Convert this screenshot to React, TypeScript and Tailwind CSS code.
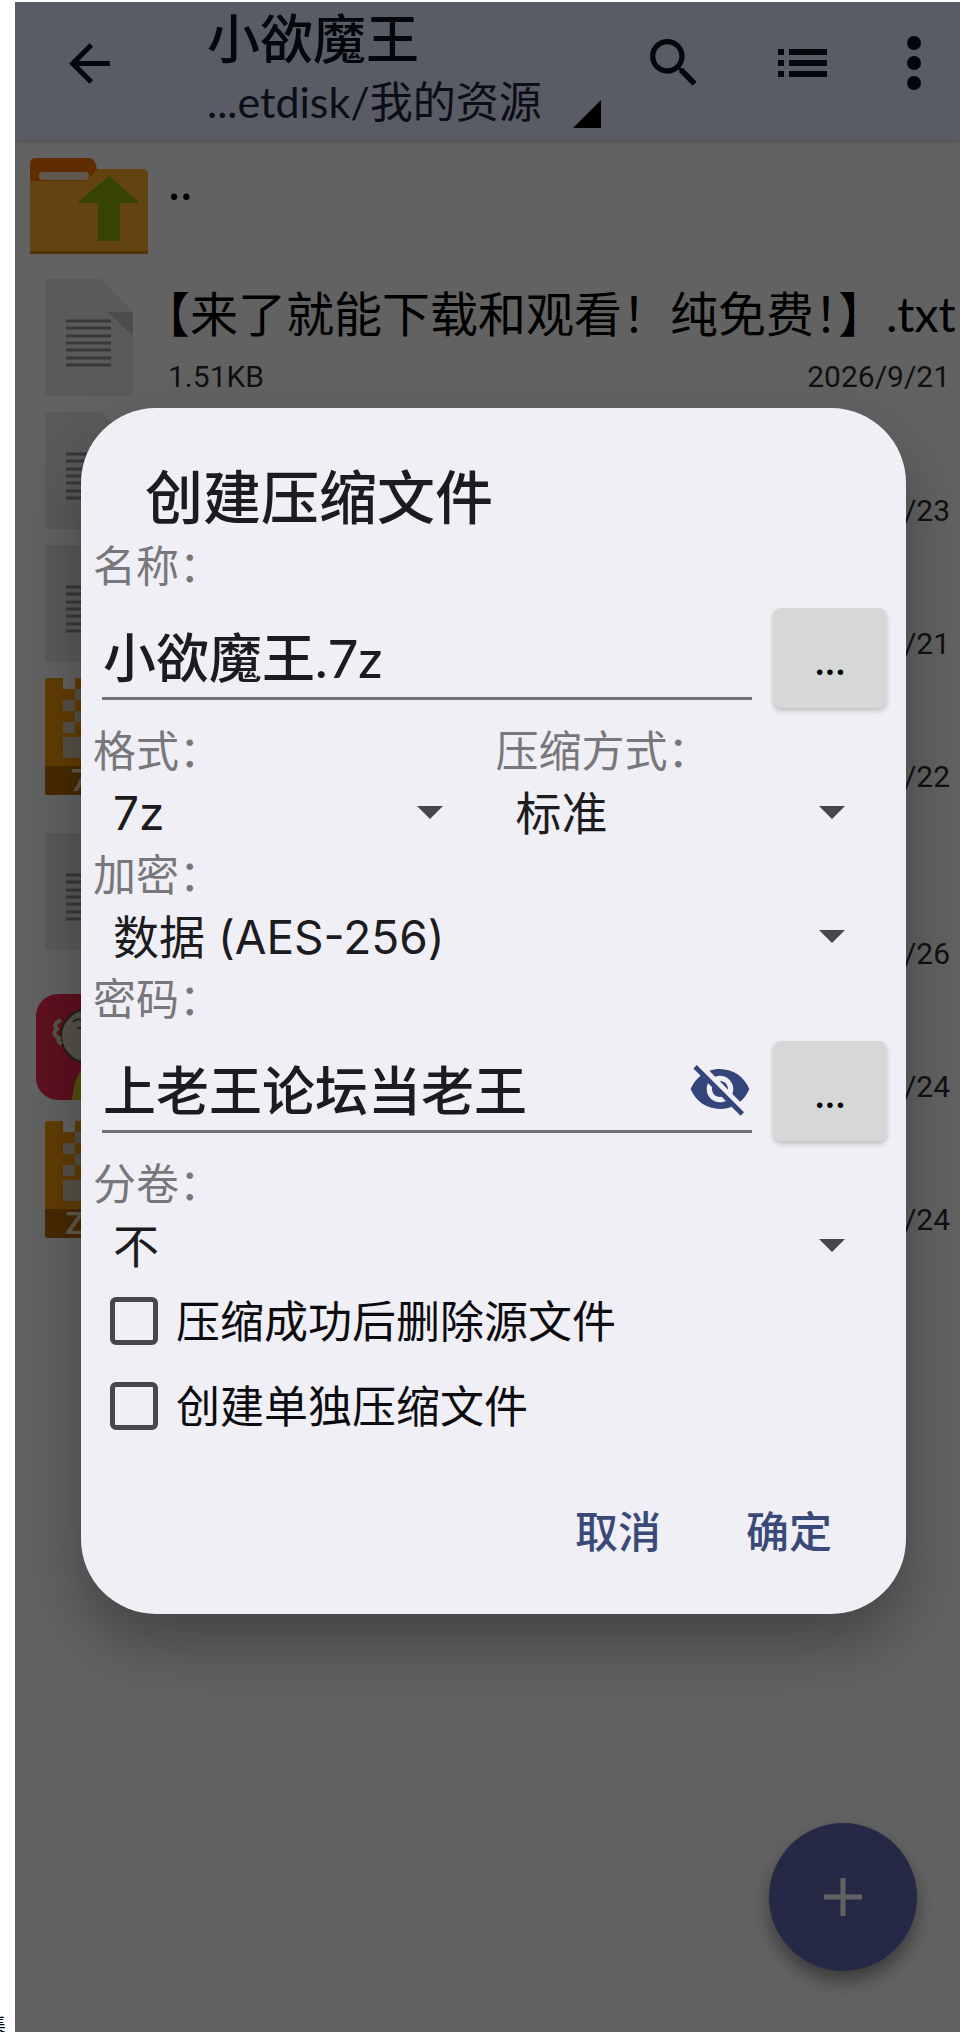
import React, { useState } from 'react';

type IconKind = 'doc' | '7z' | 'zip' | 'app';

interface FileRow {
    icon: IconKind;
    date: string;
    tall?: boolean;
}

const rows: FileRow[] = [
    { icon: 'doc', date: '2026/9/23' },
    { icon: 'doc', date: '2026/9/21' },
    { icon: '7z', date: '2026/9/22' },
    { icon: 'doc', date: '2026/9/26', tall: true },
    { icon: 'app', date: '2026/9/24' },
    { icon: 'zip', date: '2026/9/24' },
];

const FolderUpIcon = () => (
    <svg className="w-[118px] h-[98px]" viewBox="0 0 118 98">
        <path d="M0 6a5 5 0 0 1 5-5h54q6 0 8 11v12H0z" fill="#f07000" />
        <path d="M0 24h50q10-1 17-12h46q5 0 5 6v79H0z" fill="#f8a828" />
        <path d="M0 94h118v3H0z" fill="#d08008" />
        <rect x="9" y="15" width="50" height="8" rx="4" fill="#f0dcc4" />
        <path d="M79 19l31 27H90v38H68V46H47z" fill="#8ba800" />
    </svg>
);

const DocIcon = () => (
    <svg className="w-[88px] h-[117px]" viewBox="0 0 88 117">
        <path d="M0 3a3 3 0 0 1 3-3h53l32 33v81a3 3 0 0 1-3 3H3a3 3 0 0 1-3-3z" fill="#e2e2e2" />
        <path d="M63 33h25v24z" fill="#bdbdbd" />
        <path d="M21 42h45M21 49h45M21 57h45M21 64h45M21 71h45M21 79h45M21 86h45" stroke="#8c8c8c" strokeWidth="3" />
    </svg>
);

const ArchiveIcon = ({ label }: { label: string }) => (
    <svg className="w-[88px] h-[117px]" viewBox="0 0 88 117">
        <path d="M0 3a3 3 0 0 1 3-3h15v11h12V0h55a3 3 0 0 1 3 3v111a3 3 0 0 1-3 3H3a3 3 0 0 1-3-3z" fill="#f59a0a" />
        <path d="M30 11h11v11H30zM18 22h12v11H18zM30 33h11v11H30zM18 44h12v11H18zM18 59h23v21H18z" fill="#d8ccb4" />
        <path d="M0 88h88v26a3 3 0 0 1-3 3H3a3 3 0 0 1-3-3z" fill="#b56a00" />
        <text x="44" y="113" textAnchor="middle" fontFamily="Lato, sans-serif" fontWeight="700" fontSize="31" fill="#f2dfc0">{label}</text>
    </svg>
);

const AppIcon = () => (
    <svg className="w-[106px] h-[106px]" viewBox="0 0 106 106">
        <rect width="106" height="106" rx="22" fill="#ee2a4e" />
        <path d="M36 106q4-34 17-34t17 34z" fill="#d8c81c" />
        <ellipse cx="53" cy="42" rx="28" ry="27" fill="#d6d2b4" stroke="#5a4a38" strokeWidth="2" />
        <path d="M25 26q-9 4-4 9q-6 5 2 9q-2 4 3 6" fill="none" stroke="#d6d2b4" strokeWidth="4" />
        <path d="M37 28q5-5 11-1M60 27q6-4 10 1M41 34h6M62 34h6M46 54q8 6 16 0" fill="none" stroke="#6a5a46" strokeWidth="2" />
    </svg>
);

const FileIcon = ({ kind }: { kind: IconKind }) => {
    if (kind === 'doc') return <DocIcon />;
    if (kind === 'app') return <AppIcon />;
    return <ArchiveIcon label={kind === '7z' ? '7Z' : 'ZIP'} />;
};

interface DropDownProps {
    id: string;
    label: string;
    options: string[];
}

const DropDown: React.FC<DropDownProps> = ({ id, label, options }) => (
    <div className="flex-1 flex flex-col">
        <label htmlFor={id} className="h-[52px] pl-[2px] text-[43px] leading-[52px] text-[#78777c]">{label}</label>
        <div className="relative flex">
            <select id={id} className="w-full h-[72px] pl-[22px] font-[Inter,'Noto_Sans_CJK_SC',sans-serif] text-[46px] leading-[72px] text-[#1c1b20] bg-transparent appearance-none outline-none">
                {options.map((o) => <option key={o}>{o}</option>)}
            </select>
            <svg className="absolute right-[51px] top-[29px] w-[26px] h-[13px] pointer-events-none" viewBox="0 0 26 13">
                <path d="M0 0h26L13 13z" fill="#47464c" />
            </svg>
        </div>
    </div>
);

interface TextFieldProps {
    id: string;
    label: string;
    value: string;
    onChange: (value: string) => void;
    children?: React.ReactNode;
}

const TextField: React.FC<TextFieldProps> = ({ id, label, value, onChange, children }) => (
    <div className="flex flex-col">
        <label htmlFor={id} className="h-[52px] pl-[2px] text-[43px] leading-[52px] text-[#78777c]">{label}</label>
        <div className="flex items-center gap-[21px] h-[133px] pl-[11px] pr-[9px]">
            <div className="relative flex-1 min-w-0">
                <input id={id} type="text" value={value} onChange={(e) => onChange(e.target.value)}
                    className="block w-full h-[84px] pl-px pb-1 text-[53px] font-medium text-[#1c1b20] bg-transparent border-b-3 border-[#737278] outline-none" />
                {children}
            </div>
            <button type="button" className="w-[114px] h-[100px] rounded-lg bg-[#d6d8d7] text-[44px] text-black shadow-[0_3px_5px_rgba(0,0,0,0.2)]">...</button>
        </div>
    </div>
);

const CheckRow = ({ label }: { label: string }) => (
    <label className="flex items-center gap-[18px] h-[85px] pl-[19px] text-[44px] text-[#0c0c10]">
        <input type="checkbox" className="w-12 h-12 appearance-none rounded-md border-5 border-[#47464e] checked:bg-[#34457c]" />
        {label}
    </label>
);

const CreateArchiveDialog = () => {
    const [name, setName] = useState('小欲魔王.7z');
    const [password, setPassword] = useState('上老王论坛当老王');

    return (
        <form role="dialog" aria-labelledby="dialog-title" onSubmit={(e) => e.preventDefault()}
            className="w-full px-[10px] pt-[46px] pb-[31px] rounded-[75px] bg-[#f0eff5] shadow-[0_30px_60px_rgba(0,0,0,0.3)]">
            <h2 id="dialog-title" className="h-[86px] pl-[54px] text-[58px] leading-[86px] font-medium text-[#1c1b20]">创建压缩文件</h2>
            <TextField id="name" label="名称：" value={name} onChange={setName} />
            <div className="flex">
                <DropDown id="format" label="格式：" options={['7z', 'zip']} />
                <DropDown id="level" label="压缩方式：" options={['标准']} />
            </div>
            <DropDown id="encryption" label="加密：" options={['数据 (AES-256)']} />
            <TextField id="password" label="密码：" value={password} onChange={setPassword}>
                <button type="button" aria-label="隐藏密码" className="absolute right-0 top-[8px]">
                    <svg className="w-[64px] h-[64px]" viewBox="0 0 24 24" fill="#34457c">
                        <path d="M12 7c2.76 0 5 2.24 5 5 0 .65-.13 1.26-.36 1.83l2.92 2.92c1.51-1.26 2.7-2.89 3.43-4.75-1.73-4.39-6-7.5-11-7.5-1.4 0-2.74.25-3.98.7l2.16 2.16C10.74 7.13 11.35 7 12 7zM2 4.27l2.28 2.28.46.46C3.08 8.3 1.78 10.02 1 12c1.73 4.39 6 7.5 11 7.5 1.55 0 3.03-.3 4.38-.84l.42.42L19.73 22 21 20.73 3.27 3 2 4.27zM7.53 9.8l1.55 1.55c-.05.21-.08.43-.08.65 0 1.66 1.34 3 3 3 .22 0 .44-.03.65-.08l1.55 1.55c-.67.33-1.41.53-2.2.53-2.76 0-5-2.24-5-5 0-.79.2-1.53.53-2.2zm4.31-.78l3.15 3.15.02-.16c0-1.66-1.34-3-3-3l-.17.01z" />
                    </svg>
                </button>
            </TextField>
            <DropDown id="split" label="分卷：" options={['不']} />
            <div className="-mt-[3px] flex flex-col">
                <CheckRow label="压缩成功后删除源文件" />
                <CheckRow label="创建单独压缩文件" />
            </div>
            <div className="flex justify-end gap-[85px] mt-[34px] pr-[64px] text-[43px] font-medium text-[#3a4a78]">
                <button type="button" className="h-[100px]">取消</button>
                <button type="submit" className="h-[100px]">确定</button>
            </div>
        </form>
    );
};

const AppBar = () => (
    <header className="flex h-[138px] pl-[44px] pr-[39px] bg-[#dfe6fa] text-[#0a0f1e] shadow-[0_2px_4px_rgba(0,0,0,0.15)]">
        <button type="button" aria-label="返回" className="h-[122px]">
            <svg className="w-[61px] h-[61px]" viewBox="0 0 24 24" fill="currentColor">
                <path d="M20 11H7.83l5.59-5.59L12 4l-8 8 8 8 1.41-1.41L7.83 13H20v-2z" />
            </svg>
        </button>
        <div className="flex-1 min-w-0 flex items-end justify-between ml-[87px] mr-[41px] pb-2">
            <div className="flex flex-col whitespace-nowrap">
                <h1 className="text-[53px] leading-[66px] font-medium">小欲魔王</h1>
                <p className="text-[43px] leading-[60px] text-[#20253a]">...etdisk/我的资源</p>
            </div>
            <svg className="w-[28px] h-[28px] mb-1 shrink-0" viewBox="0 0 28 28">
                <path d="M28 0v28H0z" fill="#000" />
            </svg>
        </div>
        <button type="button" aria-label="搜索" className="h-[122px]">
            <svg className="w-[64px] h-[64px]" viewBox="0 0 24 24" fill="currentColor">
                <path d="M15.5 14h-.79l-.28-.27C15.41 12.59 16 11.11 16 9.5 16 5.91 13.09 3 9.5 3S3 5.91 3 9.5 5.91 16 9.5 16c1.61 0 3.09-.59 4.23-1.57l.27.28v.79l5 4.99L20.49 19l-4.99-5zm-6 0C7.01 14 5 11.99 5 9.5S7.01 5 9.5 5 14 7.01 14 9.5 11.99 14 9.5 14z" />
            </svg>
        </button>
        <button type="button" aria-label="列表" className="h-[122px] ml-[72px]">
            <svg className="w-[49px] h-[28px]" viewBox="0 0 49 28" fill="currentColor">
                <path d="M0 0h6v6H0zM11 0h38v6H11zM0 11h6v6H0zM11 11h38v6H11zM0 22h6v6H0zM11 22h38v6H11z" />
            </svg>
        </button>
        <button type="button" aria-label="更多" className="h-[122px] ml-[80px]">
            <svg className="w-[14px] h-[54px]" viewBox="0 0 14 54" fill="currentColor">
                <circle cx="7" cy="7" r="7" />
                <circle cx="7" cy="27" r="7" />
                <circle cx="7" cy="47" r="7" />
            </svg>
        </button>
    </header>
);

const FileList = () => (
    <ul className="pl-[15px] text-black">
        <li className="flex items-center gap-5 h-[131px]">
            <FolderUpIcon />
            <span className="pb-[52px] text-[52px] leading-[60px]">..</span>
        </li>
        <li className="flex items-center gap-[18px] h-[133px]">
            <span className="w-[118px] shrink-0 flex justify-center"><DocIcon /></span>
            <div className="flex-1 min-w-0 flex flex-col gap-[14px] pt-1">
                <span className="text-[48px] leading-[60px] whitespace-nowrap">
                    <span className="[font-feature-settings:'halt']">【</span>来了就能下载和观看！纯免费<span className="[font-feature-settings:'halt']">！</span>】.txt
                </span>
                <div className="flex justify-between pl-[2px] pr-[10px] font-[Roboto] text-[30px] leading-[38px] text-[#2c2c30]">
                    <span>1.51KB</span>
                    <time>2026/9/21</time>
                </div>
            </div>
        </li>
        {rows.map((row, i) => (
            <li key={i} className={row.tall ? 'flex items-center h-[177px]' : 'flex items-center h-[133px]'}>
                <span className="w-[118px] shrink-0 flex justify-center"><FileIcon kind={row.icon} /></span>
                <time className="self-end ml-auto pb-[7px] pr-[10px] font-[Roboto] text-[30px] leading-[38px] text-[#2c2c30]">{row.date}</time>
            </li>
        ))}
    </ul>
);

const App: React.FC = () => (
    <div className="flex min-h-screen pt-[2px] bg-white font-[Lato,'Noto_Sans_CJK_SC',sans-serif]" lang="zh-CN">
        <aside className="w-[15px] shrink-0 flex items-end justify-end pr-[9px] overflow-hidden">
            <span className="h-5 text-[20px] leading-[24px] text-black">集</span>
        </aside>
        <main className="relative flex-1 min-w-0 overflow-hidden bg-[#f4f4f6]">
            <AppBar />
            <FileList />
            <button type="button" aria-label="新建" className="absolute right-[43px] bottom-[61px] w-[148px] h-[148px] flex items-center justify-center rounded-full bg-[#5c68ac] shadow-[0_10px_18px_rgba(0,0,0,0.4)]">
                <svg className="w-[38px] h-[38px]" viewBox="0 0 38 38">
                    <path d="M19 0v38M0 19h38" stroke="#f4f4f8" strokeWidth="5" />
                </svg>
            </button>
            <div className="absolute inset-0 flex items-center pl-[66px] pr-[54px] pb-[13px] bg-black/60">
                <CreateArchiveDialog />
            </div>
        </main>
    </div>
);

export default App;
